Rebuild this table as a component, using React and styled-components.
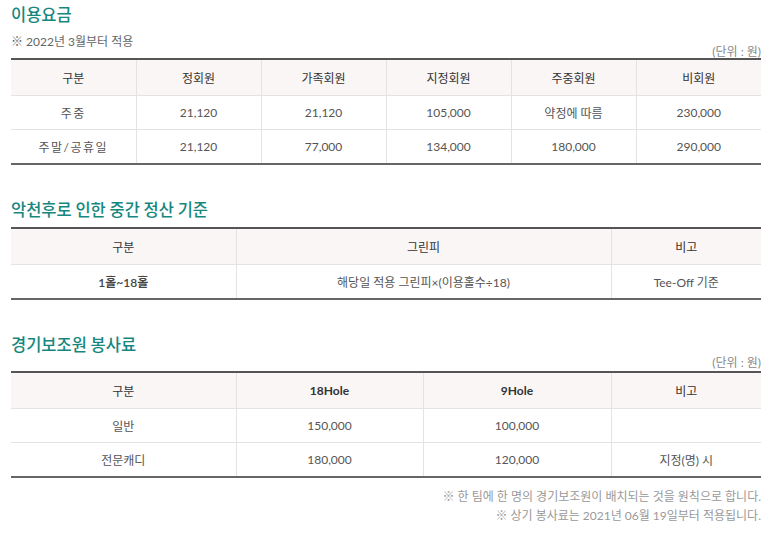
import React from 'react'
import styled, { createGlobalStyle } from 'styled-components'

const GlobalStyle = createGlobalStyle`
  body {
    margin: 0;
    background: #fff;
    font-family: Lato, "Noto Sans CJK KR", sans-serif;
    color: #555;
  }
`

const feeCols = ['구분', '정회원', '가족회원', '지정회원', '주중회원', '비회원']
const feeRows = [
  ['주중', '21,120', '21,120', '105,000', '약정에 따름', '230,000'],
  ['주말/공휴일', '21,120', '77,000', '134,000', '180,000', '290,000'],
]

const caddieRows = [
  ['일반', '150,000', '100,000', ''],
  ['전문캐디', '180,000', '120,000', '지정(명) 시'],
]

const App = () => (
  <Page>
    <GlobalStyle />
    <Section>
      <Title>이용요금</Title>
      <Note>※ 2022년 3월부터 적용</Note>
      <Unit $top={-6}>(단위 : 원)</Unit>
      <Table $top={-2}>
        <colgroup>
          {feeCols.map((c) => (
            <col key={c} style={{ width: 125 }} />
          ))}
        </colgroup>
        <thead>
          <tr>
            {feeCols.map((c) => (
              <Th key={c}>{c}</Th>
            ))}
          </tr>
        </thead>
        <tbody>
          {feeRows.map((r) => (
            <tr key={r[0]}>
              {r.map((v, i) => (
                <Td key={i} $spaced={i === 0}>
                  {v}
                </Td>
              ))}
            </tr>
          ))}
        </tbody>
      </Table>
    </Section>

    <Section $gap={33}>
      <Title>악천후로 인한 중간 정산 기준</Title>
      <Table $top={7}>
        <colgroup>
          <col style={{ width: 225 }} />
          <col style={{ width: 375 }} />
          <col style={{ width: 150 }} />
        </colgroup>
        <thead>
          <tr>
            <Th>구분</Th>
            <Th>그린피</Th>
            <Th>비고</Th>
          </tr>
        </thead>
        <tbody>
          <tr>
            <Td $strong>1홀~18홀</Td>
            <Td>해당일 적용 그린피×(이용홀수÷18)</Td>
            <Td>Tee-Off 기준</Td>
          </tr>
        </tbody>
      </Table>
    </Section>

    <Section $gap={33}>
      <Title>경기보조원 봉사료</Title>
      <Unit $top={0}>(단위 : 원)</Unit>
      <Table $top={0}>
        <colgroup>
          <col style={{ width: 225 }} />
          <col style={{ width: 187 }} />
          <col style={{ width: 188 }} />
          <col style={{ width: 150 }} />
        </colgroup>
        <thead>
          <tr>
            <Th>구분</Th>
            <Th $bold>18Hole</Th>
            <Th $bold>9Hole</Th>
            <Th>비고</Th>
          </tr>
        </thead>
        <tbody>
          {caddieRows.map((r) => (
            <tr key={r[0]}>
              {r.map((v, i) => (
                <Td key={i}>{v}</Td>
              ))}
            </tr>
          ))}
        </tbody>
      </Table>
      <Footnotes>
        <p>※ 한 팀에 한 명의 경기보조원이 배치되는 것을 원칙으로 합니다.</p>
        <p>※ 상기 봉사료는 2021년 06월 19일부터 적용됩니다.</p>
      </Footnotes>
    </Section>
  </Page>
)

export default App

const Page = styled.div`
  width: 750px;
  padding: 3px 0 0 11px;
`

const Section = styled.section`
  margin-top: ${(p) => p.$gap || 0}px;
`

const Title = styled.h2`
  margin: 0;
  font-family: "Noto Sans CJK KR", sans-serif;
  font-size: 16.5px;
  font-weight: 500;
  line-height: 22px;
  letter-spacing: 0;
  color: #16877e;
`

const Note = styled.p`
  margin: 9px 0 0;
  font-size: 12px;
  line-height: 16px;
  color: #666;
`

const Unit = styled.p`
  margin: ${(p) => p.$top}px 0 0;
  text-align: right;
  font-size: 12px;
  line-height: 16px;
  color: #888;
`

const Table = styled.table`
  width: 750px;
  margin-top: ${(p) => p.$top}px;
  border-collapse: collapse;
  table-layout: fixed;
  border-top: 2px solid #555;
  border-bottom: 2px solid #666;
  font-size: 12px;
`

const Th = styled.th`
  height: 35px;
  padding: 0;
  background: #faf6f5;
  color: #333;
  font-weight: ${(p) => (p.$bold ? 700 : 400)};
  border-bottom: 1px solid #e3e3e3;
  border-left: 1px solid #e3e3e3;
  &:first-child {
    border-left: none;
  }
`

const Td = styled.td`
  height: 33px;
  padding: 0;
  text-align: center;
  color: ${(p) => (p.$strong ? '#444' : '#555')};
  font-weight: ${(p) => (p.$strong ? 600 : 400)};
  letter-spacing: ${(p) => (p.$spaced ? '1.5px' : 'normal')};
  border-bottom: 1px solid #e3e3e3;
  border-left: 1px solid #e3e3e3;
  &:first-child {
    border-left: none;
  }
`

const Footnotes = styled.div`
  margin-top: 9px;
  text-align: right;
  font-size: 12px;
  line-height: 19px;
  color: #999;
  p {
    margin: 0;
  }
`
